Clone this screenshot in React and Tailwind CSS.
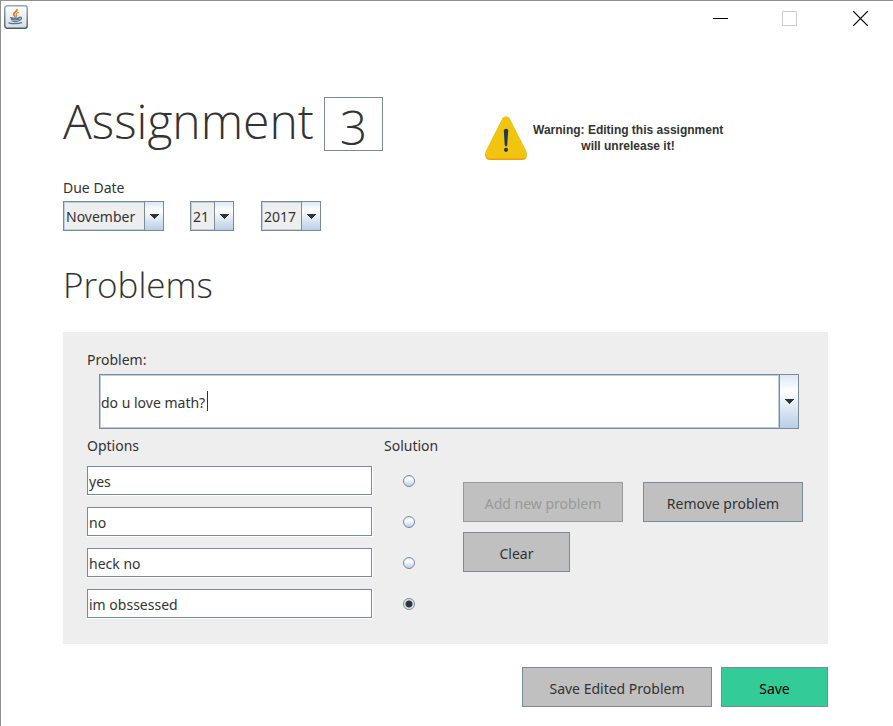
import { useState } from "react";

function JavaIcon() {
  return (
    <svg viewBox="0 0 24 24" className="h-6 w-6" aria-hidden="true">
      <defs>
        <linearGradient id="tile" x1="0" y1="0" x2="0" y2="1">
          <stop offset="0" stopColor="#ffffff" />
          <stop offset="1" stopColor="#dcdcdc" />
        </linearGradient>
        <linearGradient id="rim" x1="0" y1="0" x2="0" y2="1">
          <stop offset="0" stopColor="#8fa9b8" />
          <stop offset="1" stopColor="#3f5f73" />
        </linearGradient>
      </defs>
      <rect x="0.75" y="0.75" width="22.5" height="22.5" rx="2.5" fill="url(#tile)" stroke="url(#rim)" strokeWidth="1.4" />
      <g fill="none" strokeLinecap="round">
        <path d="M13 4.500c.6 2-3.600 2.800-3.300 4.800.1 1 1 1.500 1.300 2.200" stroke="#e8742c" strokeWidth="1.700" />
        <path d="M14.300 7.500c-2 .8-2.600 1.700-1.800 2.600.4.500.2 1-.2 1.400" stroke="#e8842c" strokeWidth="1.200" />
        <path d="M6.500 12.700c2.500.6 6.500.6 9 0M7.300 14.200c2 .8 5.500.8 7.600 0M8 16c1.800.7 4.500.7 6.300 0" stroke="#4a7898" strokeWidth="1.300" />
        <path d="M15.600 12.300c2.300-.6 2.600 2.300-.3 3.100" stroke="#4a7898" strokeWidth="1.300" />
        <path d="M5 17.800c3 1.300 9.500 1.200 12.500-.2" stroke="#4a7898" strokeWidth="1.300" />
      </g>
    </svg>
  );
}

function WarningIcon() {
  return (
    <svg viewBox="0 0 42 44" className="h-11 w-[42px] shrink-0" aria-hidden="true">
      <path d="M17.500 2.500Q21-1.500 24.500 2.500L41 35.500Q43.500 44 37 44H5Q-1.500 44 1 35.500Z" fill="#f39c12" />
      <path d="M17.500 2.500Q21-1.500 24.500 2.500L41 34.500Q43.500 42.500 37 42.500H5Q-1.500 42.500 1 34.500Z" fill="#f1c40f" />
      <path d="M18.800 14.500Q18.800 12.800 21 12.800T23.200 14.500L22.300 28.500Q22 30.500 21 30.500T19.700 28.500Z" fill="#24395a" />
      <circle cx="21" cy="33.800" r="2.100" fill="#24395a" />
    </svg>
  );
}

function Arrow() {
  return (
    <svg viewBox="0 0 10 5" className="h-[5px] w-[10px]" shapeRendering="crispEdges" aria-hidden="true">
      <path d="M0 0H10L5 5Z" fill="#333333" />
    </svg>
  );
}

const arrowBox =
  "flex w-[19px] items-center justify-center border-l border-[#7a8a99] bg-linear-to-b from-[#dde8f3] via-white via-30% to-[#b8cfe5]";

function Combo({ label, value, width }) {
  return (
    <div className={`relative h-[30px] border border-[#7a8a99] ${width}`}>
      <select
        aria-label={label}
        defaultValue={value}
        className="h-full w-full appearance-none border border-[#b8cfe5] bg-[#eeeeee] pt-0.5 pl-px text-[14px] leading-5 outline-none"
      >
        <option>{value}</option>
      </select>
      <span className={`pointer-events-none absolute inset-y-0 right-0 ${arrowBox}`}>
        <Arrow />
      </span>
    </div>
  );
}

function Button({ children, className = "", ...rest }) {
  return (
    <button
      type="button"
      className={`h-10 border border-[#7a8a99] pt-1 text-[14px] leading-5 disabled:border-[#999999] disabled:text-[#999999] ${className}`}
      {...rest}
    >
      {children}
    </button>
  );
}

const field = "border border-[#7a8a99] bg-white outline-none";
const options = ["yes", "no", "heck no", "im obssessed"];

export default function App() {
  const [solution, setSolution] = useState(3);

  return (
    <div className="min-h-screen border-t border-l border-[#919191] bg-white font-['Noto_Sans','Open_Sans',sans-serif] text-[14px] leading-5 text-[#333333]">
      <header className="flex h-9 items-start justify-between pt-1 pl-[3px]">
        <JavaIcon />
        <div className="flex pr-[25px] text-black">
          <button type="button" aria-label="Minimize" className="flex h-[26px] w-[70px] items-center justify-end">
            <svg viewBox="0 0 15 15" className="h-[15px] w-[15px]" shapeRendering="crispEdges"><path d="M0 7.500H15" stroke="currentColor" /></svg>
          </button>
          <button type="button" aria-label="Maximize" disabled className="flex h-[26px] w-[69px] items-center justify-end">
            <svg viewBox="0 0 15 15" className="h-[15px] w-[15px]"><path d="M.5.5H14.500V14.500H.5Z" fill="none" stroke="#cccccc" /></svg>
          </button>
          <button type="button" aria-label="Close" className="flex h-[26px] w-[71px] items-center justify-end">
            <svg viewBox="0 0 15 15" className="h-[15px] w-[15px]"><path d="M0 0L15 15M15 0L0 15" stroke="currentColor" strokeWidth="1.200" /></svg>
          </button>
        </div>
      </header>

      <main className="pt-[60px] pr-[65px] pb-5 pl-[62px]">
        <div className="flex h-[54px] items-start">
          <label htmlFor="number" className="w-[261px] font-['Open_Sans',sans-serif] text-[48px] leading-[48px] font-light">Assignment</label>
          <input id="number" defaultValue="3" className={`h-[54px] w-[59px] pt-1 text-center font-['Open_Sans',sans-serif] text-[48px] leading-none font-light ${field}`} />
          <div className="mt-[19px] ml-[102px] flex items-center gap-1.5">
            <WarningIcon />
            <p className="w-[190px] text-center font-['Liberation_Sans',Arial,sans-serif] text-[12px] leading-4 font-bold whitespace-nowrap">
              Warning: Editing this assignment
              <br />
              will unrelease it!
            </p>
          </div>
        </div>

        <p className="mt-[27px]">Due Date</p>
        <div className="mt-[3px] flex">
          <Combo label="Month" value="November" width="w-[101px]" />
          <Combo label="Day" value="21" width="ml-[26px] w-11" />
          <Combo label="Year" value="2017" width="ml-[27px] w-[60px]" />
        </div>

        <h2 className="mt-[26px] font-['Open_Sans',sans-serif] text-[35px] leading-[56px] font-light">Problems</h2>

        <section className="mt-[19px] bg-[#eeeeee] pt-[18px] pr-[25px] pb-[25px] pl-6">
          <label htmlFor="problem" className="block">Problem:</label>
          <div className="relative mt-1 mr-1 ml-3 flex h-[55px] border border-[#7a8a99]">
            <input
              id="problem"
              defaultValue="do u love math?"
              className="min-w-0 flex-1 border border-[#b8cfe5] bg-white pt-[3px] outline-none"
            />
            <button type="button" aria-label="Choose problem" className={arrowBox}>
              <Arrow />
            </button>
            <span className="absolute top-4 left-[107px] h-5 w-px bg-[#333333]" />
          </div>

          <div className="mt-[7px] flex">
            <div className="grid grid-cols-[286px_50px] gap-x-[11px] gap-y-[11px]">
              <span className="-mb-px h-5">Options</span>
              <span className="-mb-px h-5">Solution</span>
              {options.map((text, i) => (
                <div key={text} className="contents">
                  <div className="border-r border-b border-white">
                    <input
                      aria-label={`Option ${i + 1}`}
                      defaultValue={text}
                      className={`block h-[29px] w-full px-px pt-[2px] ${field}`}
                    />
                  </div>
                  <div className="flex items-center justify-center">
                    <input
                      type="radio"
                      name="solution"
                      aria-label={`Option ${i + 1} is the solution`}
                      checked={solution === i}
                      onChange={() => setSolution(i)}
                      className="h-3 w-3 appearance-none rounded-full border border-[#7a8a99] bg-linear-to-b from-[#dde8f3] via-white via-30% to-[#b8cfe5] checked:bg-[radial-gradient(circle,#333333_3px,#dde8f3_4px)]"
                    />
                  </div>
                </div>
              ))}
            </div>
            <div className="mt-[46px] ml-[29px] flex flex-1 flex-col gap-[10px]">
              <div className="flex gap-5">
                <Button disabled className="w-40 bg-[#c0c0c0]">Add new problem</Button>
                <Button className="w-40 bg-[#c0c0c0]">Remove problem</Button>
              </div>
              <Button className="w-[107px] bg-[#c0c0c0]">Clear</Button>
            </div>
          </div>
        </section>

        <footer className="mt-[23px] flex justify-end gap-[9px]">
          <Button className="w-[190px] bg-[#c0c0c0]">Save Edited Problem</Button>
          <Button className="w-[107px] bg-[#33cc99] text-black">Save</Button>
        </footer>
      </main>
    </div>
  );
}
